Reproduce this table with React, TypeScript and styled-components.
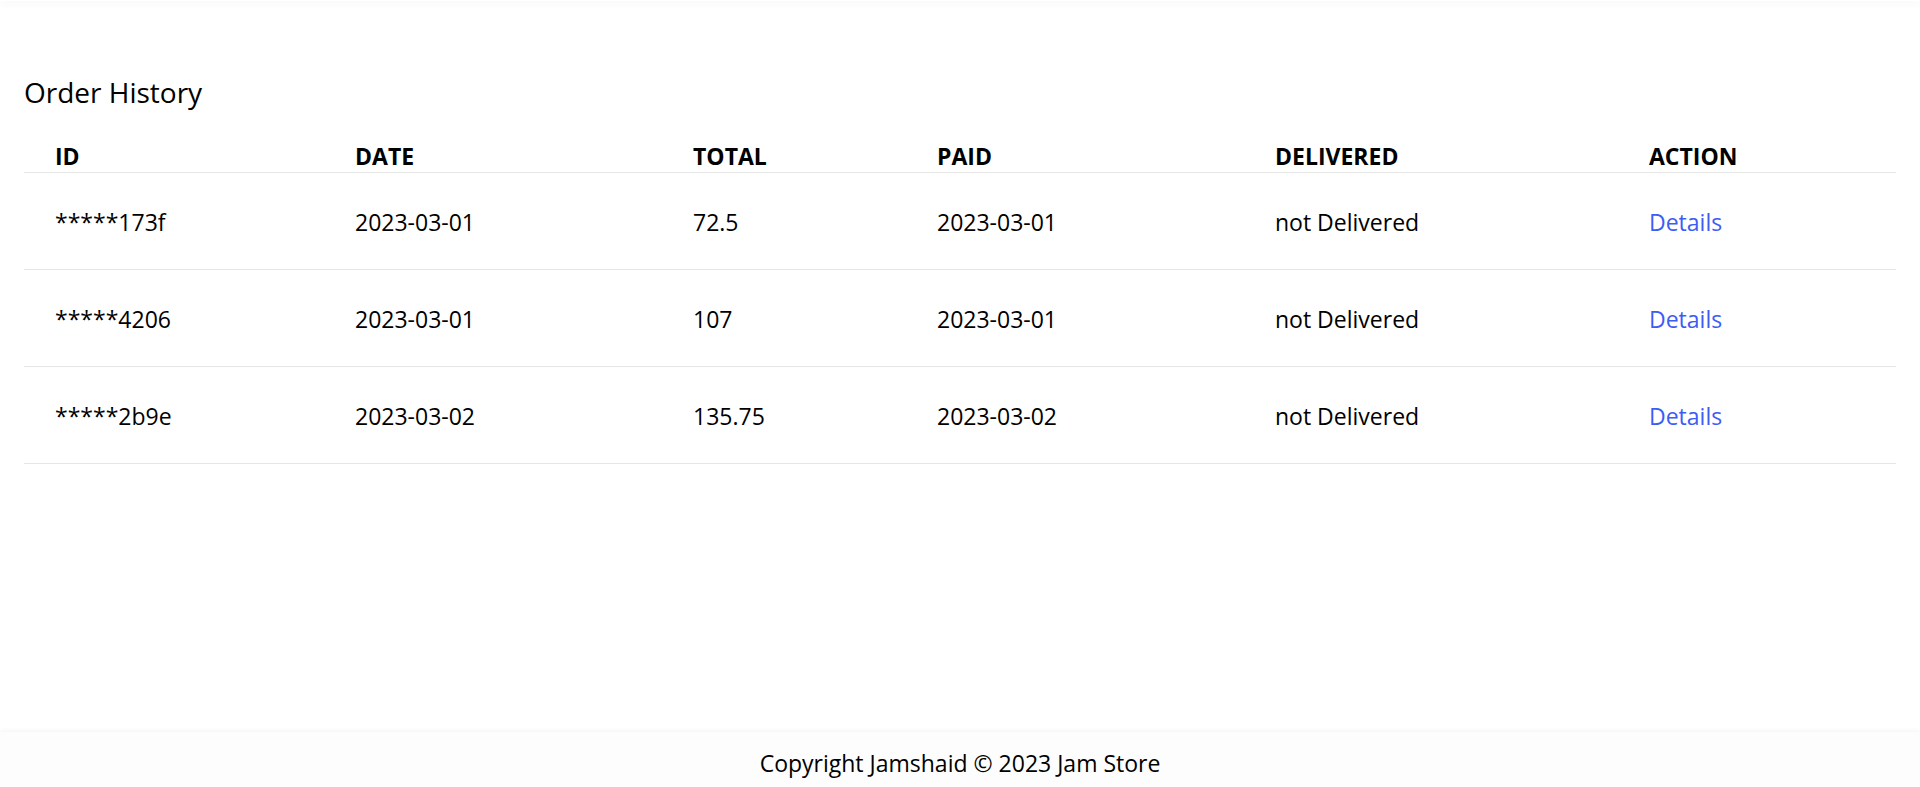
import React from "react";
import styled, { createGlobalStyle } from "styled-components";

const GlobalStyle = createGlobalStyle`
  html, body {
    margin: 0;
    padding: 0;
    background: #ffffff;
  }
  body {
    font-family: "Open Sans", "Noto Sans", Arial, sans-serif;
    color: #000;
  }
  * { box-sizing: border-box; }
`;

const Page = styled.div`
  min-height: 100vh;
  display: flex;
  flex-direction: column;
`;

const TopBar = styled.header`
  height: 1px;
  background: #fff;
  box-shadow: 0 1px 8px rgba(0, 0, 0, 0.18);
`;

const Main = styled.main`
  flex: 1;
  padding: 73px 24px 24px;
`;

const Title = styled.h1`
  margin: 0 0 30px;
  font-size: 28px;
  line-height: 36px;
  font-weight: 400;
`;

const Table = styled.table`
  width: 100%;
  border-collapse: collapse;
  table-layout: fixed;
`;

const HeadCell = styled.th<{ $w: number }>`
  width: ${(p) => p.$w}px;
  text-align: left;
  font-size: 23px;
  line-height: 32px;
  font-weight: 700;
  padding: 0 0 0 31px;
  border-bottom: 1px solid #e6e6e6;
`;

const Row = styled.tr`
  border-bottom: 1px solid #e6e6e6;
`;

const Cell = styled.td`
  font-size: 23px;
  line-height: 32px;
  padding: 33px 0 31px 31px;
  white-space: nowrap;
`;

const DetailsLink = styled.a`
  color: #3d5cf5;
  text-decoration: none;
  cursor: pointer;
`;

const Footer = styled.footer`
  height: 55px;
  padding-top: 6px;
  display: flex;
  align-items: center;
  justify-content: center;
  background: #fdfdfd;
  box-shadow: 0 0 6px rgba(0, 0, 0, 0.07);
  font-size: 23px;
`;

const columns = [
  { key: "ID", w: 300 },
  { key: "DATE", w: 338 },
  { key: "TOTAL", w: 244 },
  { key: "PAID", w: 338 },
  { key: "DELIVERED", w: 374 },
  { key: "ACTION", w: 278 },
];

const orders = [
  { id: "*****173f", date: "2023-03-01", total: "72.5", paid: "2023-03-01" },
  { id: "*****4206", date: "2023-03-01", total: "107", paid: "2023-03-01" },
  { id: "*****2b9e", date: "2023-03-02", total: "135.75", paid: "2023-03-02" },
];

export default function App() {
  return (
    <>
      <GlobalStyle />
      <Page>
        <TopBar />
        <Main>
          <Title>Order History</Title>
          <Table>
            <thead>
              <tr>
                {columns.map((c) => (
                  <HeadCell key={c.key} $w={c.w}>
                    {c.key}
                  </HeadCell>
                ))}
              </tr>
            </thead>
            <tbody>
              {orders.map((o) => (
                <Row key={o.id}>
                  <Cell>{o.id}</Cell>
                  <Cell>{o.date}</Cell>
                  <Cell>{o.total}</Cell>
                  <Cell>{o.paid}</Cell>
                  <Cell>not Delivered</Cell>
                  <Cell>
                    <DetailsLink>Details</DetailsLink>
                  </Cell>
                </Row>
              ))}
            </tbody>
          </Table>
        </Main>
        <Footer>Copyright Jamshaid © 2023 Jam Store</Footer>
      </Page>
    </>
  );
}
